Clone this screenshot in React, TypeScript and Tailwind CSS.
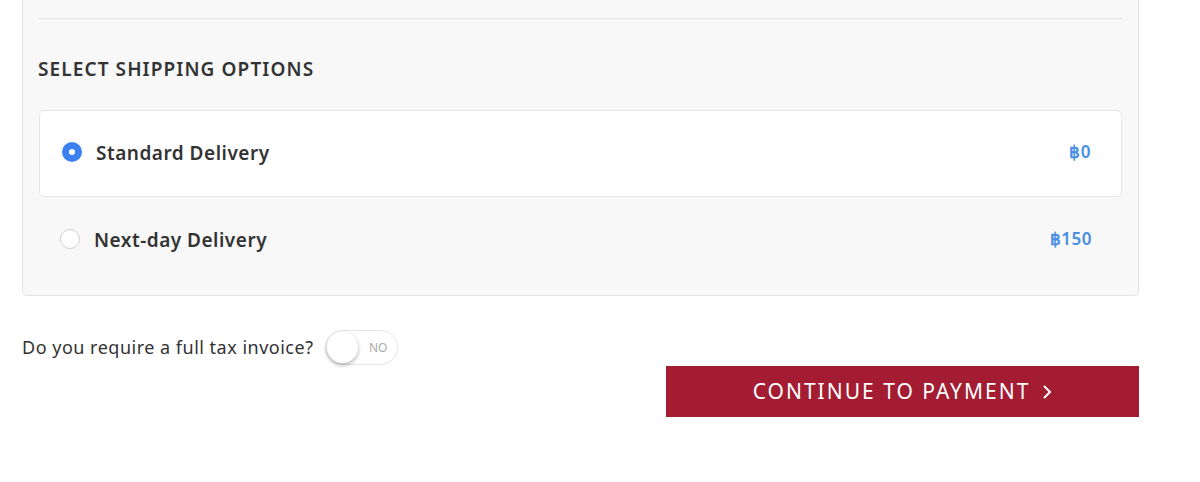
import { useState } from "react";

type Option = {
  id: string;
  label: string;
  price: string;
};

const options: Option[] = [
  { id: "standard", label: "Standard Delivery", price: "฿0" },
  { id: "nextday", label: "Next-day Delivery", price: "฿150" },
];

export default function App() {
  const [selected, setSelected] = useState("standard");
  const [taxInvoice, setTaxInvoice] = useState(false);

  return (
    <div className="w-[1200px] h-[482px] bg-white overflow-hidden font-['Noto_Sans',sans-serif] text-[#333]">
      <div className="ml-[22px] w-[1117px] bg-[#f8f8f8] border-x border-b border-[#e3e3e3] rounded-b-[5px] px-[16px] pb-[11px]">
        <div className="h-[19px] border-b border-[#e2e2e2]" />
        <h2 className="mt-[38px] -ml-[1px] text-[19px] leading-[24px] font-semibold tracking-[1.1px] text-[#333]">
          SELECT SHIPPING OPTIONS
        </h2>
        <div className="mt-[29px] flex flex-col">
          {options.map((o) => {
            const active = selected === o.id;
            return (
              <label
                key={o.id}
                onClick={() => setSelected(o.id)}
                className={`flex items-center h-[87px] cursor-pointer rounded-[5px] border ${
                  active ? "bg-white border-[#e6e6e6] pl-[22px] pr-[30px]" : "border-transparent pl-[20px] pr-[29px]"
                }`}
              >
                <span
                  className={`w-[20px] h-[20px] rounded-full flex items-center justify-center -mt-[4px] ${
                    active ? "bg-[#3b82f0]" : "bg-white border border-[#cfcfcf]"
                  }`}
                >
                  {active && <span className="w-[6px] h-[6px] rounded-full bg-white" />}
                </span>
                <span className="ml-[14px] text-[19px] font-semibold tracking-[0.5px] text-[#333]">{o.label}</span>
                <span className="ml-auto -mt-[4px] text-[17px] font-semibold tracking-[0.5px] text-[#4a90e2]">{o.price}</span>
              </label>
            );
          })}
        </div>
      </div>

      <div className="ml-[22px] w-[1117px] mt-[34px] flex items-center">
        <span className="text-[18px] tracking-[0.5px] text-[#333]">Do you require a full tax invoice?</span>
        <button
          onClick={() => setTaxInvoice(!taxInvoice)}
          className="ml-[12px] relative w-[73px] h-[35px] rounded-full border border-[#e5e5e5] bg-white"
        >
          <span
            className={`absolute top-[1px] w-[31px] h-[31px] rounded-full bg-white shadow-[0_2px_4px_rgba(0,0,0,0.3)] ${
              taxInvoice ? "left-[39px]" : "left-[1px]"
            }`}
          />
          <span className="absolute right-[10px] top-1/2 -translate-y-1/2 text-[12px] text-[#aaa]">
            {taxInvoice ? "YES" : "NO"}
          </span>
        </button>
      </div>

      <div className="ml-[22px] w-[1117px] flex justify-end">
        <button className="mt-[1px] w-[473px] h-[51px] bg-[#a31c32] text-white text-[21px] tracking-[2px] flex items-center justify-center gap-[12px]">
          <span>CONTINUE TO PAYMENT</span>
          <svg width="10" height="16" viewBox="0 0 10 16" fill="none">
            <path d="M2 2l6 6-6 6" stroke="white" strokeWidth="2" />
          </svg>
        </button>
      </div>
    </div>
  );
}
